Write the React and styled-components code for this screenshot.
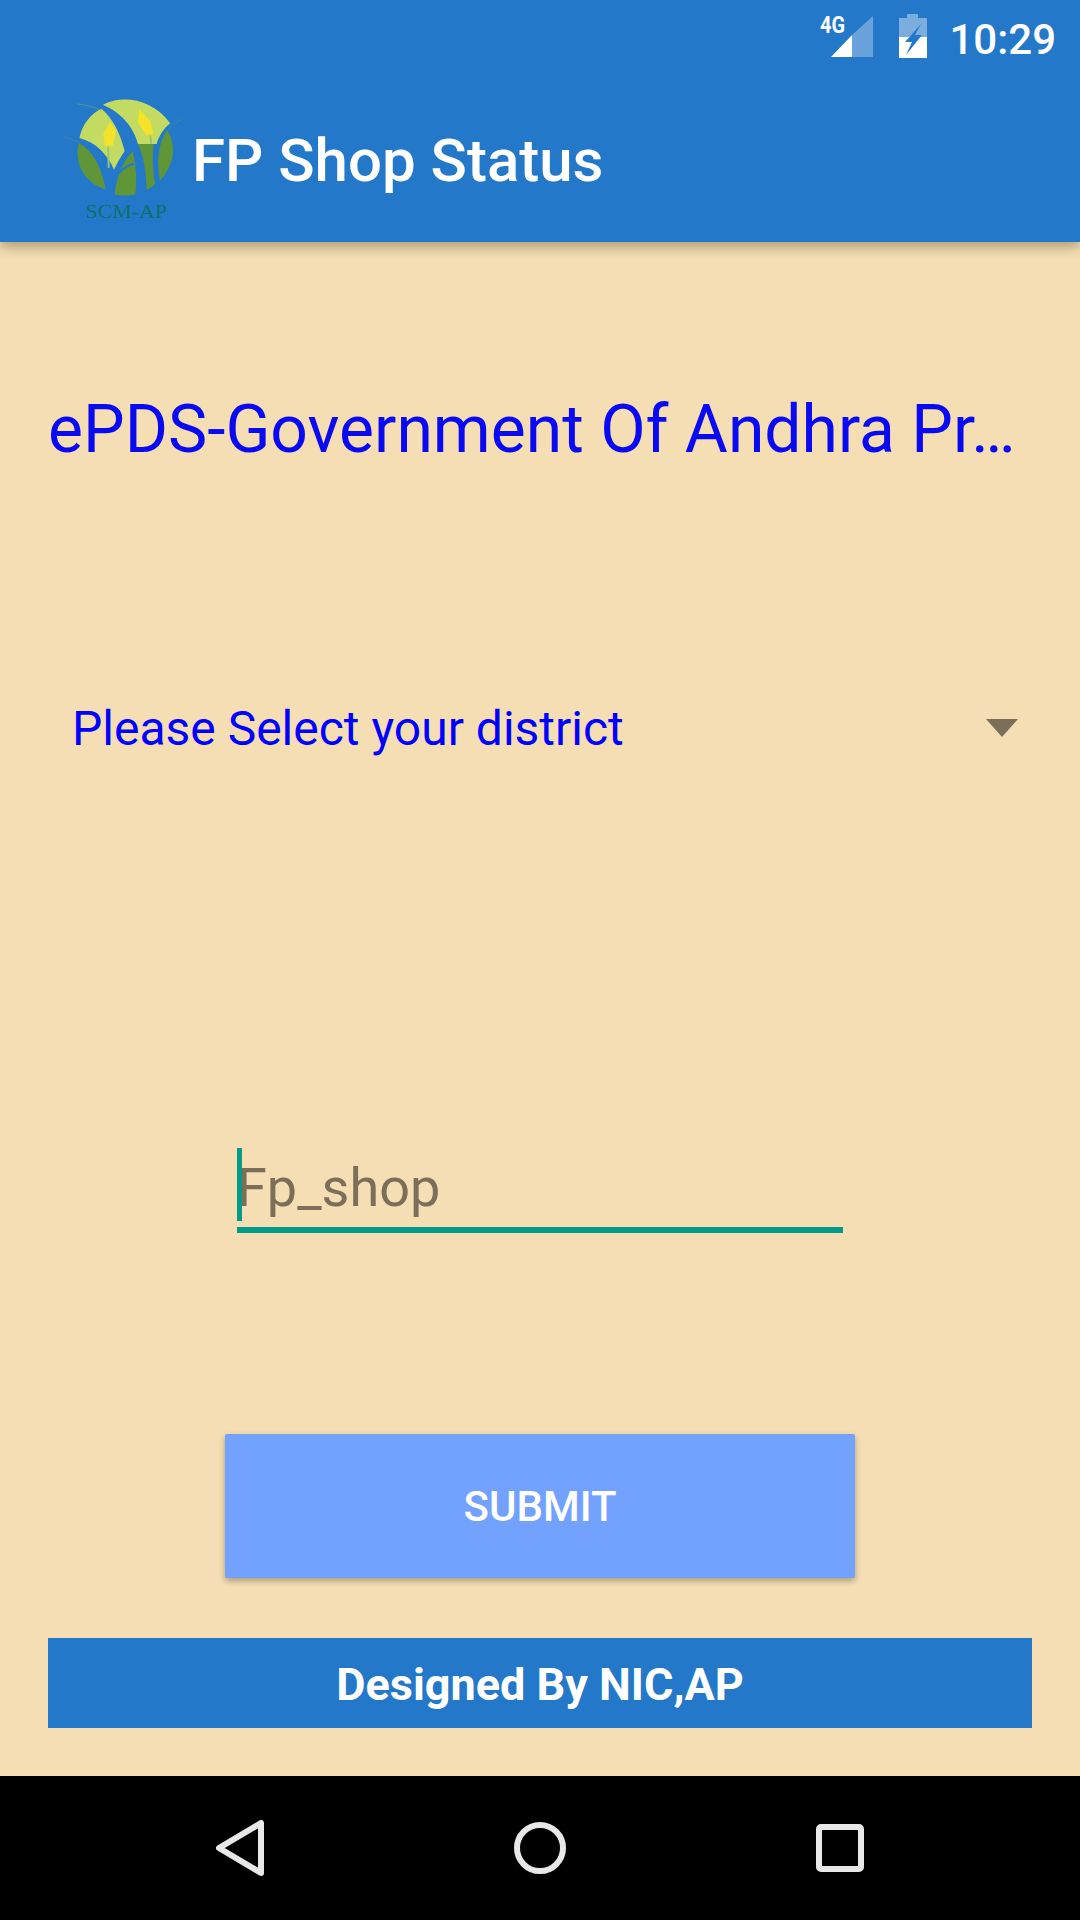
import styled, { createGlobalStyle } from 'styled-components';

const Global = createGlobalStyle`
  html, body {
    margin: 0;
    padding: 0;
    background: #f5deb3;
    font-family: Roboto, 'Noto Sans', sans-serif;
  }
`;

const Screen = styled.div`
  width: 1080px;
  height: 1920px;
  display: flex;
  flex-direction: column;
  overflow: hidden;
`;

const Header = styled.header`
  height: 242px;
  flex: none;
  background: #2478ca;
  box-shadow: 0 5px 12px rgba(0, 0, 0, 0.3);
  position: relative;
  z-index: 1;
`;

const StatusBar = styled.div`
  height: 72px;
  display: flex;
  align-items: center;
  justify-content: flex-end;
  padding-right: 24px;
`;

const Clock = styled.span`
  color: #fff;
  font-size: 42px;
  font-weight: 500;
  margin: 7px 0 0 21px;
`;

const BatteryIcon = styled.svg`
  margin-left: 24px;
`;

const AppBar = styled.div`
  display: flex;
  align-items: center;
  height: 170px;
  padding-left: 62px;
`;

const LogoMark = styled.svg`
  margin-top: 6px;
  flex: none;
`;

const AppTitle = styled.h1`
  margin: 6px 0 0 0;
  color: #fff;
  font-size: 60px;
  font-weight: 500;
`;

const Body = styled.main`
  flex: 1;
  display: flex;
  flex-direction: column;
  padding: 0 48px;
`;

const Heading = styled.div`
  margin-top: 150px;
  font-size: 66px;
  line-height: 75px;
  color: #0a0af0;
  white-space: nowrap;
`;

const Select = styled.div`
  margin-top: 231px;
  display: flex;
  align-items: center;
  justify-content: space-between;
  padding: 0 14px 0 24px;
  height: 60px;
  color: #0000ff;
  font-size: 48px;
`;

const Arrow = styled.span`
  width: 0;
  height: 0;
  border-left: 16px solid transparent;
  border-right: 16px solid transparent;
  border-top: 18px solid #7b6f59;
`;

const Field = styled.div`
  margin: 390px 0 0 189px;
  width: 606px;
  height: 79px;
  border-bottom: 6px solid #009b89;
  position: relative;
  color: #7b6f59;
  font-size: 54px;
  line-height: 79px;
`;

const Caret = styled.span`
  position: absolute;
  left: 0;
  top: 0;
  width: 5px;
  height: 73px;
  background: #009b89;
`;

const Submit = styled.button`
  display: block;
  margin: 201px 0 0 177px;
  width: 630px;
  height: 144px;
  border: 0;
  border-radius: 2px;
  background: #72a2fd;
  color: #fff;
  font-family: Roboto, sans-serif;
  font-size: 42px;
  font-weight: 500;
  box-shadow: 0 3px 6px rgba(0, 0, 0, 0.3);
`;

const Credit = styled.div`
  margin-top: 60px;
  height: 88px;
  padding-top: 2px;
  background: #2478ca;
  color: #fff;
  font-size: 45px;
  font-weight: 700;
  display: flex;
  align-items: center;
  justify-content: center;
`;

const NavBar = styled.nav`
  height: 144px;
  flex: none;
  background: #000;
  display: flex;
  align-items: center;
  justify-content: space-between;
  padding: 0 216px;
`;

// coordinates follow a 3x crop of the logo
function Logo() {
  return (
    <LogoMark width="130" height="133" viewBox="60 40 390 400">
      <defs>
        <filter id="soft">
          <feGaussianBlur stdDeviation="1.6" />
        </filter>
      </defs>
      <g filter="url(#soft)">
        <path d="M112 172 C120 130 148 98 178 84 C212 112 236 160 248 212 C238 226 226 246 216 268 C198 222 160 184 112 172Z" fill="#c4db62" />
        <path d="M182 72 C240 42 330 52 385 128 C362 146 350 170 344 190 L288 190 C276 142 238 94 182 72Z" fill="#c4db62" />
        <path d="M110 188 C150 206 180 262 190 326 C130 310 94 250 110 188Z" fill="#5f9637" />
        <path d="M218 342 C222 290 245 238 272 212 C284 260 284 310 280 342 C258 346 238 346 218 342Z" fill="#5f9637" />
        <path d="M214 300 C230 272 252 256 276 250" fill="none" stroke="#2478ca" strokeWidth="6" />
        <path d="M288 190 L335 190 C330 230 334 290 340 310 C332 318 324 324 314 328 C312 270 306 230 288 190Z" fill="#5f9637" />
        <path d="M376 150 C402 190 402 250 354 300 C344 250 346 190 376 150Z" fill="#5f9637" />
        <path d="M105 70 C130 72 160 80 180 90" fill="none" stroke="#7fb04a" strokeWidth="3" opacity="0.5" />
        <path d="M65 168 C80 172 96 178 112 188" fill="none" stroke="#4f9a6a" strokeWidth="3" opacity="0.5" />
        <path d="M420 115 C405 124 390 136 376 150" fill="none" stroke="#4f9a6a" strokeWidth="3" opacity="0.5" />
        <path d="M198 200 L200 262" stroke="#9cc472" strokeWidth="6" />
        <path d="M325 165 L328 190" stroke="#9cc472" strokeWidth="6" />
        <path d="M203 124 L222 150 L212 196 L188 196 L184 160Z" fill="#f4e32a" />
        <path d="M292 84 L326 122 L334 160 L312 164 L288 124Z" fill="#f4e32a" />
        <text x="130" y="414" fontFamily="'Liberation Serif', serif" fontSize="58" fill="#0f6f68" textLength="245" lengthAdjust="spacingAndGlyphs">SCM-AP</text>
      </g>
    </LogoMark>
  );
}

function App() {
  return (
    <Screen>
      <Global />
      <Header>
        <StatusBar>
          <svg width="54" height="60" viewBox="0 -8 54 60">
            <path d="M53 2 V43 H32 V21Z" fill="#fff" opacity="0.32" />
            <path d="M32 21 V43 H11Z" fill="#fff" />
            <text x="0" y="19" fontFamily="Roboto, sans-serif" fontSize="23" fontWeight="700" fill="#fff" textLength="25" lengthAdjust="spacingAndGlyphs">4G</text>
          </svg>
          <BatteryIcon width="30" height="44" viewBox="0 0 30 44">
            <path d="M9 0 H20 V4 H29 V44 H1 V4 H9Z" fill="#fff" opacity="0.4" />
            <path d="M1 23 H29 V44 H1Z" fill="#fff" />
            <path d="M23 10 L7 28 H14 L8 41 L24 21 H17Z" fill="#2478ca" />
          </BatteryIcon>
          <Clock>10:29</Clock>
        </StatusBar>
        <AppBar>
          <Logo />
          <AppTitle>FP Shop Status</AppTitle>
        </AppBar>
      </Header>
      <Body>
        <Heading>ePDS-Government Of Andhra Pr…</Heading>
        <Select>
          Please Select your district
          <Arrow />
        </Select>
        <Field>
          Fp_shop
          <Caret />
        </Field>
        <Submit>SUBMIT</Submit>
        <Credit>Designed By NIC,AP</Credit>
      </Body>
      <NavBar>
        <svg width="48" height="56" viewBox="0 0 48 56">
          <path d="M45 3 V53 L3 28Z" fill="none" stroke="#e8e8e8" strokeWidth="6" strokeLinejoin="round" />
        </svg>
        <svg width="52" height="52" viewBox="0 0 52 52">
          <circle cx="26" cy="26" r="23" fill="none" stroke="#e8e8e8" strokeWidth="6" />
        </svg>
        <svg width="48" height="48" viewBox="0 0 48 48">
          <rect x="3" y="3" width="42" height="42" rx="2" fill="none" stroke="#e8e8e8" strokeWidth="6" />
        </svg>
      </NavBar>
    </Screen>
  );
}

export default App;
